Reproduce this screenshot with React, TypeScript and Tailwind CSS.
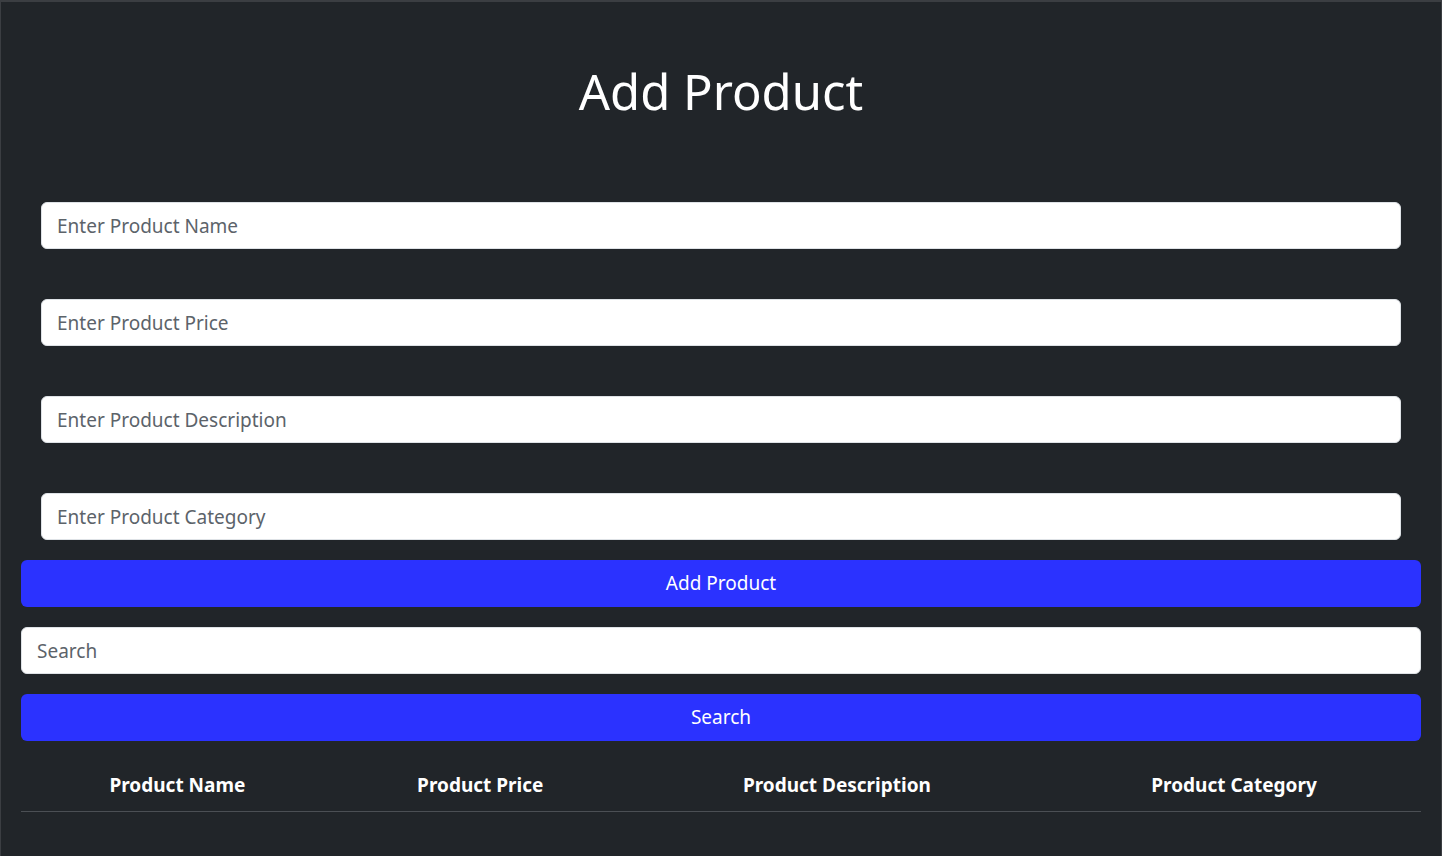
import { useState } from 'react';

const font = { fontFamily: '"Noto Sans", "Open Sans", sans-serif' };

export default function App() {
  const [name, setName] = useState('');
  const [price, setPrice] = useState('');
  const [description, setDescription] = useState('');
  const [category, setCategory] = useState('');
  const [search, setSearch] = useState('');

  const inputClass =
    'w-full h-[47px] bg-white border border-[#dee2e6] rounded-md px-[15px] text-[19px] text-[#212529] placeholder:text-[#5c636a] outline-none';

  return (
    <main
      className="min-h-screen bg-[#212529] border-t-2 border-x border-[#3b3e42] [font-family:'Noto_Sans','Open_Sans',sans-serif]"
    >
      <div className="px-5">
        <h1 className="pt-[59px] text-center text-[49px] leading-[60px] text-white font-normal">Add Product</h1>

        <div className="mt-[81px] px-5 flex flex-col gap-[50px]">
          <input className={inputClass} placeholder="Enter Product Name" value={name} onChange={(e) => setName(e.target.value)} />
          <input className={inputClass} placeholder="Enter Product Price" value={price} onChange={(e) => setPrice(e.target.value)} />
          <input className={inputClass} placeholder="Enter Product Description" value={description} onChange={(e) => setDescription(e.target.value)} />
          <input className={inputClass} placeholder="Enter Product Category" value={category} onChange={(e) => setCategory(e.target.value)} />
        </div>

        <button className="mt-5 w-full h-[47px] rounded-md bg-[#2b32ff] text-white text-[19px]">Add Product</button>

        <input className={`mt-5 ${inputClass}`} placeholder="Search" value={search} onChange={(e) => setSearch(e.target.value)} />

        <button className="mt-5 w-full h-[47px] rounded-md bg-[#2b32ff] text-white text-[19px]">Search</button>

        <table className="mt-[18px] w-full text-white" style={font}>
          <thead>
            <tr className="border-b border-[#4b4f54]">
              <th className="px-2 py-[11px] text-[19px] leading-[30px] font-bold">Product Name</th>
              <th className="px-2 py-[11px] text-[19px] leading-[30px] font-bold">Product Price</th>
              <th className="px-2 py-[11px] text-[19px] leading-[30px] font-bold">Product Description</th>
              <th className="px-2 py-[11px] text-[19px] leading-[30px] font-bold">Product Category</th>
            </tr>
          </thead>
          <tbody></tbody>
        </table>
      </div>
    </main>
  );
}
